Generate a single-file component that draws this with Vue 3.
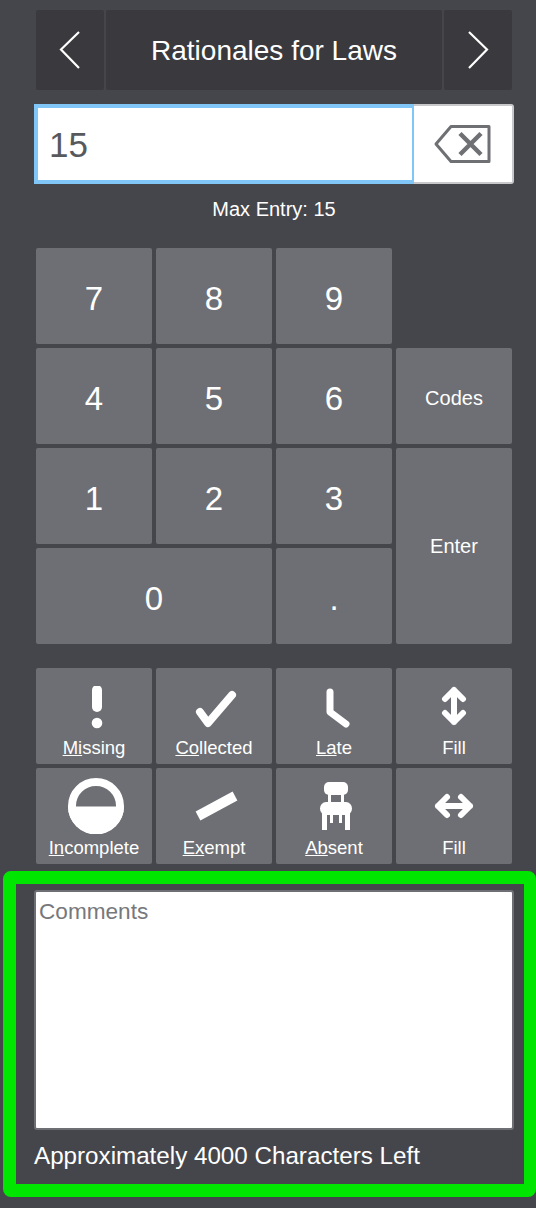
<template>
  <div class="page">
    <section class="pad">
      <nav class="nav">
        <button class="nav-btn">
          <svg width="24" height="38" viewBox="0 0 24 38"><path d="M21 1 3 18.500 21 37" fill="none" stroke="#fff" stroke-width="2.200" /></svg>
        </button>
        <div class="nav-title">Rationales for Laws</div>
        <button class="nav-btn">
          <svg width="24" height="38" viewBox="0 0 24 38"><path d="M3 1 21 18.500 3 37" fill="none" stroke="#fff" stroke-width="2.200" /></svg>
        </button>
      </nav>

      <div class="entry">
        <div class="entry-field">15</div>
        <button class="entry-del">
          <svg width="58" height="40" viewBox="0 0 58 40">
            <path d="M55 2.500H17L2 20l15 17.500h38z" fill="none" stroke="#6f7074" stroke-width="3" stroke-linejoin="round" />
            <path d="M26 9.500l21 21M47 9.500l-21 21" fill="none" stroke="#6f7074" stroke-width="4.500" />
          </svg>
        </button>
      </div>
      <p class="max">Max Entry: 15</p>

      <div class="keys">
        <button v-for="k in keys" :key="k.label" class="key" :class="k.cls">{{ k.label }}</button>
      </div>

      <div class="marks">
        <button class="mark">
          <svg width="60" height="48" viewBox="0 0 60 48"><path d="M33 4v17" stroke="#fff" stroke-width="10" stroke-linecap="round" /><circle cx="33" cy="37" r="5.300" fill="#fff" /></svg>
          <span><u>Mi</u>ssing</span>
        </button>
        <button class="mark">
          <svg width="60" height="48" viewBox="0 0 60 48"><path d="M16 26l8 11L48 9" fill="none" stroke="#fff" stroke-width="8" stroke-linecap="round" stroke-linejoin="round" /></svg>
          <span><u>Co</u>llected</span>
        </button>
        <button class="mark">
          <svg width="60" height="48" viewBox="0 0 60 48"><path d="M26 6v20l16 12" fill="none" stroke="#fff" stroke-width="7" stroke-linecap="round" stroke-linejoin="round" /></svg>
          <span><u>La</u>te</span>
        </button>
        <button class="mark">
          <svg width="60" height="48" viewBox="0 0 60 48"><path d="M30 4v32M21 13l9-9 9 9M21 27l9 9 9-9" fill="none" stroke="#fff" stroke-width="6" stroke-linecap="round" stroke-linejoin="round" /></svg>
          <span>Fill</span>
        </button>
        <button class="mark">
          <svg width="60" height="58" viewBox="0 0 60 58"><circle cx="32" cy="30" r="24" fill="none" stroke="#fff" stroke-width="8" /><path d="M4 30.500h56a28 28 0 0 1-56 0z" fill="#fff" /></svg>
          <span><u>In</u>complete</span>
        </button>
        <button class="mark">
          <svg width="60" height="58" viewBox="0 0 60 58"><path d="M14 40 51 20" stroke="#fff" stroke-width="10" /></svg>
          <span><u>Ex</u>empt</span>
        </button>
        <button class="mark">
          <svg width="60" height="58" viewBox="0 0 60 58">
            <rect x="20" y="6" width="24" height="13" rx="5" fill="#fff" />
            <path d="M24 18h3v9h-3zM37 18h3v9h-3z" fill="#fff" />
            <path d="M22 26h20a6.500 6.500 0 0 1 6 6.500 6.500 6.500 0 0 1-2 5V54h-5V39h-3v8h-3v-8h-6v8h-3v-8h-3v15h-5V37.500a6.500 6.500 0 0 1-2-5A6.500 6.500 0 0 1 22 26z" fill="#fff" />
          </svg>
          <span><u>Ab</u>sent</span>
        </button>
        <button class="mark">
          <svg width="60" height="58" viewBox="0 0 60 58"><path d="M14 30h32M23 21l-9 9 9 9M37 21l9 9-9 9" fill="none" stroke="#fff" stroke-width="6" stroke-linecap="round" stroke-linejoin="round" /></svg>
          <span>Fill</span>
        </button>
      </div>
    </section>

    <section class="notes">
      <textarea class="notes-input" placeholder="Comments"></textarea>
      <p class="notes-left">Approximately 4000 Characters Left</p>
    </section>
  </div>
</template>

<script setup>
const keys = [
  { label: "7" },
  { label: "8" },
  { label: "9" },
  { label: "", cls: "gap" },
  { label: "4" },
  { label: "5" },
  { label: "6" },
  { label: "Codes", cls: "small" },
  { label: "1" },
  { label: "2" },
  { label: "3" },
  { label: "Enter", cls: "small enter" },
  { label: "0", cls: "zero" },
  { label: "." },
];
</script>

<style>
html,
body {
  background: #45464c;
}
</style>

<style scoped>
.page {
  width: 536px;
  height: 1208px;
  background: #45464c;
  font-family: "Liberation Sans", Arial, sans-serif;
  color: #fff;
  overflow: hidden;
}

button {
  font-family: inherit;
  color: #fff;
  border: none;
  padding: 0;
}

.pad {
  padding: 10px 24px 0 36px;
}

.nav {
  display: grid;
  grid-template-columns: 68px 1fr 68px;
  gap: 2px;
  height: 80px;
}

.nav-btn,
.nav-title {
  display: flex;
  align-items: center;
  justify-content: center;
  background: #39393e;
  border-radius: 2px;
}

.nav-title {
  padding-top: 2px;
  font-size: 28px;
}

.entry {
  display: flex;
  height: 80px;
  margin: 14px -2px 0;
}

.entry-field {
  flex: 1;
  display: flex;
  align-items: center;
  padding: 2px 0 0 11px;
  background: #fff;
  border: 4px solid #80c7f7;
  border-right-width: 2px;
  color: #58595d;
  font-size: 35px;
}

.entry-del {
  width: 100px;
  display: flex;
  align-items: center;
  justify-content: center;
  background: #fff;
  border: 2px solid #c8c8ca;
  border-left: none;
  border-radius: 0 3px 3px 0;
}

.max {
  margin: 14px 0 0;
  height: 22px;
  font-size: 20px;
  line-height: 22px;
  text-align: center;
}

.keys,
.marks {
  display: grid;
  grid-template-columns: repeat(4, 116px);
  grid-auto-rows: 96px;
  gap: 4px;
}

.keys {
  margin-top: 28px;
}

.key {
  padding-top: 6px;
  background: #6e6f74;
  border-radius: 2px;
  font-size: 33px;
}

.key.gap {
  background: none;
}

.key.small {
  padding-top: 4px;
  font-size: 20px;
}

.key.enter {
  grid-row: span 2;
  padding-top: 0;
}

.key.zero {
  grid-column: span 2;
}

.marks {
  margin-top: 24px;
}

.mark {
  display: flex;
  flex-direction: column;
  align-items: center;
  justify-content: flex-end;
  padding-bottom: 5px;
  background: #6e6f74;
  border-radius: 2px;
  font-size: 18.500px;
  line-height: 22px;
}

.mark svg {
  margin-bottom: 3px;
}

.notes {
  box-sizing: border-box;
  height: 326px;
  margin: 7px 0 0 3px;
  padding: 6px 10px 0 18px;
  border: 13px solid #00e600;
  border-right-width: 12px;
  border-radius: 8px;
}

.notes-input {
  display: block;
  box-sizing: border-box;
  width: 480px;
  height: 240px;
  padding: 7px 3px;
  margin: 0;
  background: #fff;
  border: 2px solid #6e6f74;
  border-radius: 3px;
  font-family: inherit;
  font-size: 22.600px;
  resize: none;
  outline: none;
}

.notes-input::placeholder {
  color: #77787c;
  opacity: 1;
}

.notes-left {
  margin: 12px 0 0;
  font-size: 24.200px;
  line-height: 28px;
}
</style>
